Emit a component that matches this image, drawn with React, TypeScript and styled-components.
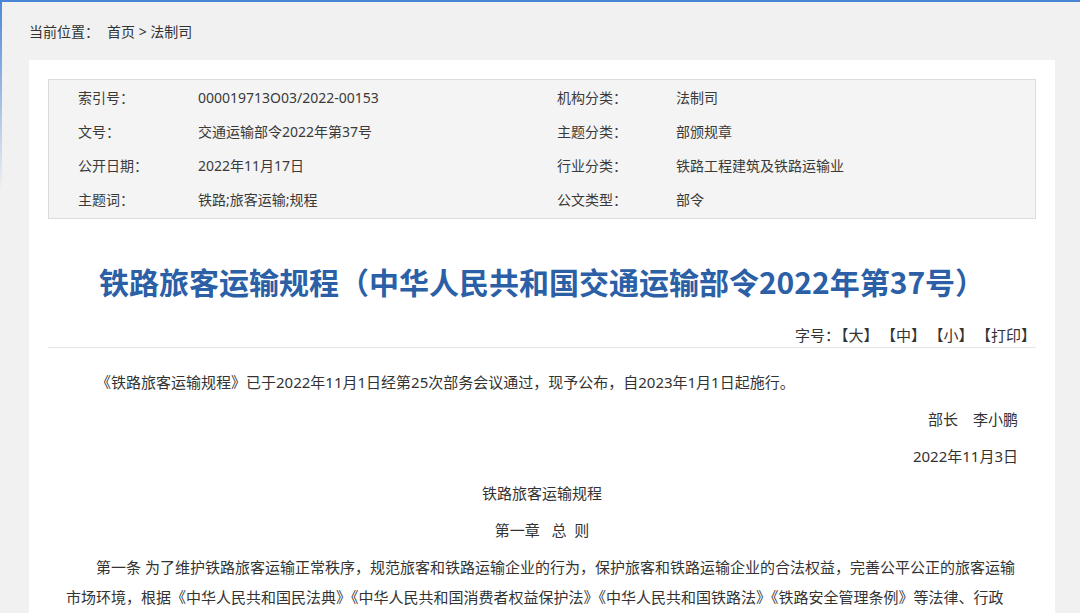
import React from "react";
import styled, {createGlobalStyle} from "styled-components";

const GlobalStyle = createGlobalStyle`
    html, body {
        margin: 0;
        padding: 0;
    }
    body {
        font-family: "Noto Sans", "Noto Sans CJK SC", sans-serif;
        color: #333;
        background:
            linear-gradient(#4a86d6, #4a86d6) left top / 100% 2px no-repeat,
            linear-gradient(to bottom, #4a86d6, rgba(74, 134, 214, 0) 190px) left top / 2px 190px no-repeat,
            #f1f1f1;
        min-height: 613px;
    }
`;

const Page = styled.div`
    padding: 0 25px 0 29px;
`;
const Crumbs = styled.div`
    height: 60px;
    box-sizing: border-box;
    padding-top: 22px;
    font-size: 14px;
    line-height: 20px;
    color: #333;
    span {
        margin-right: 8px;
    }
`;
const Panel = styled.div`
    background: #fff;
    padding: 19px 19px 0;
    min-height: 553px;
    box-sizing: border-box;
`;
const MetaBox = styled.div`
    background: #f4f4f4;
    border: 1px solid #dcdcdc;
    padding: 1px 0 1px 29px;
    display: grid;
    grid-template-columns: 120px 359px 119px 1fr;
    font-size: 14px;
    color: #3a3a3a;
`;
const MetaCell = styled.div`
    height: 34px;
    line-height: 34px;
    white-space: nowrap;
`;
const Title = styled.h1`
    margin: 42px 0 0;
    font-size: 30px;
    line-height: 40px;
    font-weight: bold;
    color: #2b5fa6;
    text-align: center;
    font-family: "Noto Sans CJK SC", sans-serif;
`;
const Tools = styled.div`
    margin-top: 22px;
    height: 24px;
    line-height: 24px;
    font-size: 15px;
    text-align: right;
    border-bottom: 1px solid #e6e6e6;
    font-family: "Noto Sans CJK SC", sans-serif;
    color: #333;
`;
const ToolLink = styled.a`
    color: #333;
    text-decoration: none;
    cursor: pointer;
    margin-left: 10px;
    &:first-of-type {
        margin-left: 1px;
    }
`;
const Article = styled.div`
    padding: 12px 18px 0;
    font-size: 15px;
`;
const Para = styled.p<{ $align?: "left" | "center" | "right"; $indent?: boolean }>`
    margin: 7px 0;
    line-height: 30px;
    text-align: ${props => props.$align || "left"};
    text-indent: ${props => (props.$indent ? "2em" : "0")};
`;

const meta = [
    ["索引号：", "000019713O03/2022-00153", "机构分类：", "法制司"],
    ["文号：", "交通运输部令2022年第37号", "主题分类：", "部颁规章"],
    ["公开日期：", "2022年11月17日", "行业分类：", "铁路工程建筑及铁路运输业"],
    ["主题词：", "铁路;旅客运输;规程", "公文类型：", "部令"],
];

function App() {
    return (
        <>
            <GlobalStyle/>
            <Page>
                <Crumbs>
                    <span>当前位置：</span>首页 &gt; 法制司
                </Crumbs>
                <Panel>
                    <MetaBox>
                        {meta.map(row => row.map((cell, i) => (
                            <MetaCell key={row[0] + i}>{cell}</MetaCell>
                        )))}
                    </MetaBox>
                    <Title>铁路旅客运输规程（中华人民共和国交通运输部令2022年第37号）</Title>
                    <Tools>
                        字号：<ToolLink>【大】</ToolLink><ToolLink>【中】</ToolLink><ToolLink>【小】</ToolLink><ToolLink>【打印】</ToolLink>
                    </Tools>
                    <Article>
                        <Para $indent>《铁路旅客运输规程》已于2022年11月1日经第25次部务会议通过，现予公布，自2023年1月1日起施行。</Para>
                        <Para $align="right">部长　李小鹏</Para>
                        <Para $align="right">2022年11月3日</Para>
                        <Para $align="center">铁路旅客运输规程</Para>
                        <Para $align="center">第一章&nbsp;&nbsp;&nbsp;总&nbsp;&nbsp;则</Para>
                        <Para $indent>
                            第一条 为了维护铁路旅客运输正常秩序，规范旅客和铁路运输企业的行为，保护旅客和铁路运输企业的合法权益，完善公平公正的旅客运输市场环境，根据《中华人民共和国民法典》《中华人民共和国消费者权益保护法》《中华人民共和国铁路法》《铁路安全管理条例》等法律、行政法规，制定本规程。
                        </Para>
                    </Article>
                </Panel>
            </Page>
        </>
    );
}

export default App;
